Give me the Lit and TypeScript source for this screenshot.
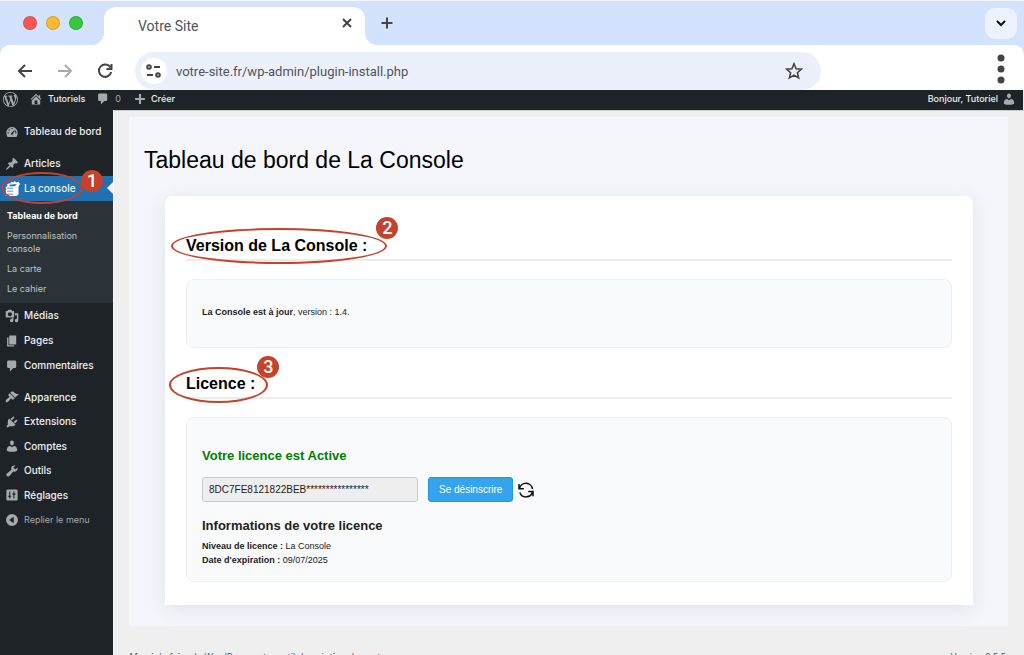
import { LitElement, html, css, svg } from "lit";
import { customElement, property } from "lit/decorators.js";

const glyphs: Record<string, unknown> = {
  wordpress: svg`<path fill-rule="evenodd" d="M20 10c0-5.510-4.490-10-10-10C4.480 0 0 4.490 0 10c0 5.520 4.480 10 10 10 5.510 0 10-4.480 10-10zM7.780 15.370L4.370 6.220c.550-.020 1.170-.080 1.170-.080.500-.060.440-1.130-.060-1.110 0 0-1.450.110-2.370.110-.180 0-.370 0-.580-.010C4.120 2.690 6.870 1.110 10 1.110c2.330 0 4.450.870 6.050 2.340-.680-.110-1.650.390-1.650 1.580 0 .740.450 1.360.900 2.100.350.610.550 1.360.550 2.460 0 1.490-1.400 5-1.400 5l-3.030-8.370c.540-.020.820-.170.820-.170.500-.050.440-1.250-.060-1.220 0 0-1.440.120-2.380.120-.870 0-2.330-.120-2.330-.120-.500-.030-.560 1.200-.060 1.220l.920.080 1.260 3.410zM17.410 10c.240-.640.740-1.870.430-4.250.700 1.290 1.050 2.710 1.050 4.250 0 3.290-1.730 6.240-4.400 7.780.970-2.590 1.940-5.200 2.920-7.780zM6.100 18.090C3.120 16.650 1.110 13.530 1.110 10c0-1.300.230-2.480.720-3.590C3.250 10.300 4.670 14.200 6.100 18.090zm4.030-6.630l2.580 6.980c-.860.290-1.760.450-2.710.450-.790 0-1.570-.110-2.290-.330.810-2.380 1.620-4.740 2.420-7.100z"/>`,
  home: svg`<path d="M16 8.5l1.53 1.53-1.06 1.06L10 4.6l-6.47 6.49-1.06-1.06L10 2.5l4 4v-2h2v4zm-6-2.46l6 5.99V18H4v-5.97zM12 17v-5H8v5h4z"/>`,
  comment: svg`<path d="M5 2h9c1.1 0 2 .9 2 2v7c0 1.1-.9 2-2 2h-2l-5 5v-5H5c-1.1 0-2-.9-2-2V4c0-1.1.9-2 2-2z"/>`,
  plus: svg`<path d="M17 8.5v3h-5.5V17h-3v-5.5H3v-3h5.5V3h3v5.5z"/>`,
  dashboard: svg`<path fill-rule="evenodd" d="M3.76 17h12.48c1.34-1.63 1.76-3.73 1.76-6 0-4.42-3.58-8-8-8s-8 3.58-8 8c0 2.27.42 4.37 1.76 6zM9 5a1 1 0 1 1 2 0 1 1 0 0 1-2 0zM5 7a1 1 0 1 1 2 0 1 1 0 0 1-2 0zm3.5 5.5c0-.8.7-1.3 1.3-1.6L14.5 6l-2.8 6.5c0 2.300-3.200 2.200-3.200 0zM15 8a1 1 0 1 1 0 2 1 1 0 0 1 0-2zM3.5 11a1 1 0 1 1 2 0 1 1 0 0 1-2 0zm11 0a1 1 0 1 1 2 0 1 1 0 0 1-2 0z"/>`,
  pin: svg`<path d="M10.44 3.02l1.82-1.82 6.36 6.35-1.83 1.82c-1.05-.68-2.48-.57-3.41.36l-.75.75c-.92.93-1.04 2.35-.35 3.41l-1.83 1.82-2.41-2.41-2.8 2.79c-.42.42-3.38 2.71-3.8 2.29s1.86-3.39 2.28-3.81l2.79-2.79L4.1 9.36l1.83-1.82c1.05.69 2.48.57 3.4-.36l.75-.75c.93-.92 1.05-2.35.36-3.41z"/>`,
  console: svg`<path fill-rule="evenodd" d="M1 8l2-1V4l3-1 1 1 1-3 3 1 2-2 2 2 3-1 2 3-2 3v11l-3 2H1v-3l1-1-1-1v-3l1-1-1-1zM3 9v1h8V9zm0 4v1h8v-1zm0 4v1h8v-1zM6 5v2h7l3-3z"/>`,
  media: svg`<path fill-rule="evenodd" d="M13 11V4c0-.55-.45-1-1-1h-1.670L9 1H5L3.670 3H2c-.55 0-1 .45-1 1v7c0 .55.45 1 1 1h10c.55 0 1-.45 1-1zM7 4.500a3 3 0 1 1 0 6 3 3 0 0 1 0-6zM14 6h5v10.500a2.500 2.500 0 1 1-2-2.450V9h-3zm-4 8.050V13h2v3.500a2.500 2.500 0 1 1-2-2.450z"/>`,
  pages: svg`<path d="M6 15V2h10v13H6zm-1 1h8v2H3V5h2v11z"/>`,
  appearance: svg`<path d="M14.48 11.06L7.41 3.99l1.5-1.5c.5-.56 2.3-.47 3.51.32 1.21.8 1.43 1.28 2.91 2.1 1.18.64 2.45 1.26 4.45.85zm-.71.71L6.7 4.7 4.93 6.47c-.39.39-.39 1.02 0 1.41l1.06 1.06c.39.39.39 1.03 0 1.42-.6.6-1.43 1.11-2.21 1.69-.35.26-.7.53-1.01.84C1.43 14.23.4 16.08 1.4 17.07c.99 1 2.84-.03 4.18-1.36.31-.31.58-.66.85-1.02.57-.78 1.08-1.61 1.69-2.21.39-.39 1.02-.39 1.41 0l1.06 1.06c.39.39 1.02.39 1.41 0z"/>`,
  plugin: svg`<path d="M13.11 4.36L9.87 7.6 8 5.73l3.24-3.24c.35-.34 1.05-.2 1.56.32.52.51.66 1.21.31 1.55zm-8 1.77l.91-1.12 9.01 9.01-1.19.84c-.71.71-2.63 1.16-3.82 1.16H6.14L4.9 17.26c-.59.59-1.54.59-2.12 0-.59-.58-.59-1.53 0-2.12l1.24-1.24v-3.88c0-1.13.4-3.19 1.09-3.89zm7.26 3.97l3.24-3.24c.34-.35 1.04-.21 1.55.31.52.51.66 1.21.31 1.55l-3.24 3.25z"/>`,
  user: svg`<path d="M10 9.250c-2.270 0-2.730-3.440-2.730-3.440C7 4.020 7.820 2 9.970 2c2.160 0 2.980 2.020 2.710 3.810 0 0-.410 3.440-2.680 3.440zm0 2.570L12.720 10c2.390 0 4.520 2.330 4.520 4.530v2.490s-3.650 1.130-7.240 1.130c-3.650 0-7.240-1.130-7.240-1.130v-2.490c0-2.250 1.940-4.480 4.470-4.480z"/>`,
  tools: svg`<path d="M16.68 9.77c-1.34 1.34-3.3 1.67-4.95.99l-5.41 6.52c-.99.99-2.59.99-3.58 0s-.99-2.59 0-3.57l6.52-5.42c-.68-1.65-.35-3.61.99-4.95 1.28-1.28 3.12-1.62 4.72-1.06l-2.89 2.89 2.82 2.82 2.86-2.87c.53 1.58.18 3.39-1.08 4.65z"/>`,
  settings: svg`<path fill-rule="evenodd" d="M18 16V4c0-1.1-.9-2-2-2H4c-1.1 0-2 .9-2 2v12c0 1.1.9 2 2 2h12c1.1 0 2-.9 2-2zM6 5h1.5v6H9v1.5H7.5V15H6v-2.500H4.500V11H6zm6 0h1.500v3H15v1.500h-1.500V15H12V9.500h-1.500V8H12z"/>`,
  collapse: svg`<path fill-rule="evenodd" d="M10 1.500a8.500 8.500 0 1 1 0 17 8.500 8.500 0 0 1 0-17zM12.500 5.500L6 10l6.500 4.500z"/>`,
};

const icon = (name: string) =>
  html`<svg class="icon" viewBox="0 0 20 20" aria-hidden="true">${glyphs[name]}</svg>`;

@customElement("step-mark")
class StepMark extends LitElement {
  @property() label = "";
  static styles = css`
    :host { position: absolute; inset: 0; pointer-events: none; }
    .ring { position: absolute; inset: 0; border: 2px solid #c5432d; border-radius: 50%; }
    .dot {
      position: absolute; right: -11px; top: -11px; width: 22px; height: 22px;
      border-radius: 50%; background: #c5432d; color: #fff; text-align: center;
      font: 500 18px/22px Roboto, sans-serif;
    }
    :host([low]) .dot { right: -20px; top: -2px; }
  `;
  render() {
    return html`<div class="ring"></div><div class="dot">${this.label}</div>`;
  }
}

@customElement("browser-chrome")
class BrowserChrome extends LitElement {
  static styles = css`
    :host { display: block; font-family: Roboto, sans-serif; background: #d3e3fd; }
    button { border: 0; padding: 0; background: none; color: #444; display: grid; place-items: center; }
    svg { fill: none; stroke: currentColor; stroke-width: 2; display: block; }
    .strip { display: flex; align-items: center; height: 45px; box-sizing: border-box; border-top: 1px solid #f4f8fe; padding: 0 7px 0 23px; }
    .light { width: 14px; height: 14px; border-radius: 50%; margin-right: 9px; box-sizing: border-box; border: 1px solid #0002; }
    .red { background: #fb5750; }
    .amber { background: #fcbb2e; }
    .green { background: #37c840; }
    .tab {
      position: relative; align-self: flex-end; display: flex; align-items: center; justify-content: space-between;
      box-sizing: border-box; width: 261px; height: 38px; margin-left: 12px; padding: 0 10px 0 34px;
      background: #fff; border-radius: 12px 12px 0 0; color: #505357; font-size: 14px;
    }
    .tab::before, .tab::after { content: ""; position: absolute; bottom: 0; width: 12px; height: 12px; }
    .tab::before { right: 100%; background: radial-gradient(circle at 0 0, #0000 12px, #fff 12px); }
    .tab::after { left: 100%; background: radial-gradient(circle at 100% 0, #0000 12px, #fff 12px); }
    .tab button { padding-bottom: 6px; }
    .new { margin-left: 15px; }
    .more { margin-left: auto; width: 32px; height: 31px; border-radius: 10px; background: #edf3fe; color: #111; }
    .bar { display: flex; align-items: center; height: 45px; background: #fff; border-radius: 10px 10px 0 0; padding: 7px 13px 0 15px; box-sizing: border-box; }
    .nav { width: 20px; margin-right: 20px; }
    .faded { color: #aaa; }
    .address {
      flex: 0 1 686px; display: flex; align-items: center; height: 38px; min-width: 0; box-sizing: border-box;
      border-radius: 19px; background: #ebf0fa; padding: 0 18px 0 6px;
    }
    .site { flex: none; width: 26px; height: 26px; border-radius: 50%; background: #fff; }
    input { flex: 1; min-width: 0; border: 0; background: none; padding: 1px 0 0; margin-left: 9px; font: 13px Roboto, sans-serif; color: #50535a; }
    .menu { margin-left: auto; width: 20px; padding-bottom: 5px; }
    .menu svg { fill: currentColor; stroke: none; }
  `;
  render() {
    return html`
      <div class="strip">
        <span class="light red"></span><span class="light amber"></span><span class="light green"></span>
        <div class="tab"><span>Votre Site</span>
          <button aria-label="Fermer"><svg width="16" height="16" viewBox="0 0 16 16"><path d="M4 4l8 8M12 4l-8 8"/></svg></button>
        </div>
        <button class="new" aria-label="Nouvel onglet"><svg width="14" height="14" viewBox="0 0 14 14"><path d="M7 1.500v11M1.500 7h11"/></svg></button>
        <button class="more" aria-label="Onglets"><svg width="14" height="14" viewBox="0 0 14 14"><path d="M3 5l4 4 4-4"/></svg></button>
      </div>
      <div class="bar">
        <button class="nav" aria-label="Retour"><svg width="20" height="20" viewBox="0 0 20 20"><path d="M17 10H4M10 4l-6 6 6 6"/></svg></button>
        <button class="nav faded" aria-label="Suivant"><svg width="20" height="20" viewBox="0 0 20 20"><path d="M3 10h13M10 4l6 6-6 6"/></svg></button>
        <button class="nav" aria-label="Recharger"><svg width="20" height="20" viewBox="0 0 20 20"><path d="M15.500 6.500A6.200 6.200 0 1 0 16.200 11M16.500 3v5h-5"/></svg></button>
        <div class="address">
          <button class="site" aria-label="Infos du site"><svg width="18" height="16" viewBox="0 0 18 16"><circle cx="4" cy="4" r="1.800"/><path d="M9 4h6M2 12h6"/><circle cx="13" cy="12" r="1.800"/></svg></button>
          <input aria-label="Adresse" value="votre-site.fr/wp-admin/plugin-install.php">
          <button aria-label="Favori"><svg width="18" height="18" viewBox="0 0 18 18"><path d="M9 1.800l2.100 4.900 5.300.5-4 3.500 1.200 5.200L9 13.100l-4.600 2.800 1.200-5.200-4-3.500 5.300-.5z" stroke-width="1.600"/></svg></button>
        </div>
        <button class="menu" aria-label="Menu"><svg width="8" height="30" viewBox="0 0 8 30"><circle cx="4" cy="4" r="3.500"/><circle cx="4" cy="15" r="3.500"/><circle cx="4" cy="26" r="3.500"/></svg></button>
      </div>`;
  }
}

@customElement("admin-bar")
class AdminBar extends LitElement {
  static styles = css`
    :host { display: flex; align-items: center; height: 20px; box-sizing: border-box; padding: 0 7px 2px 3px; margin-right: 1px; background: #1d2327; color: #f0f0f1; font: 500 9px/18px Inter, sans-serif; }
    a { display: flex; align-items: center; gap: 5px; color: inherit; text-decoration: none; }
    .icon { width: 14px; height: 14px; fill: #a7aaad; }
    .wp .icon { width: 15px; height: 15px; }
    .home { margin-left: 11px; }
    .comments { margin-left: 11px; color: #a7aaad; font-weight: 400; }
    .new { margin-left: 12px; gap: 4px; }
    .me { margin-left: auto; gap: 4px; }
  `;
  render() {
    return html`
      <a class="wp" href="#" aria-label="WordPress">${icon("wordpress")}</a>
      <a class="home" href="#">${icon("home")}Tutoriels</a>
      <a class="comments" href="#">${icon("comment")}0</a>
      <a class="new" href="#">${icon("plus")}Créer</a>
      <a class="me" href="#">Bonjour, Tutoriel ${icon("user")}</a>`;
  }
}

@customElement("admin-menu")
class AdminMenu extends LitElement {
  static styles = css`
    :host { display: block; background: #1d2327; color: #f0f0f1; font: 500 10px/13px Inter, sans-serif; padding-top: 9px; border-right: 1px solid #f8f8f8; }
    a, button { color: inherit; text-decoration: none; }
    .item { display: flex; align-items: center; gap: 5px; width: 100%; height: 25px; padding: 0 0 0 5px; box-sizing: border-box; border: 0; background: none; font: inherit; }
    .icon { width: 14px; height: 14px; fill: #a7aaad; flex: none; }
    .group { padding-bottom: 7px; }
    .group:last-child { display: grid; grid-auto-rows: 1fr; height: 147px; padding: 0; }
    .group:last-child .item { height: auto; }
    .current { position: relative; background: #2271b1; }
    .current .icon { width: 15px; height: 15px; margin-right: -1px; fill: #fff; }
    .current::after { content: ""; position: absolute; right: 0; top: 6px; border: 6px solid transparent; border-left: 0; border-right-color: #f0f0f1; }
    .mark { position: absolute; left: 1px; top: -4px; width: 82px; height: 32px; }
    .sub { background: #2c3338; color: #bfc3c7; font-weight: 400; font-size: 9px; padding: 4px 7px 5px; }
    .sub a { display: block; padding: 4px 30px 3px 0; }
    .sub a:first-child { color: #fff; font-weight: 700; padding-right: 0; }
    .item.collapse { color: #a7aaad; font-weight: 400; font-size: 9px; }
  `;
  private item(name: string, text: string) {
    return html`<a class="item" href="#">${icon(name)}${text}</a>`;
  }
  render() {
    return html`<nav>
      <div class="group">${this.item("dashboard", "Tableau de bord")}</div>
      <div class="group">
        ${this.item("pin", "Articles")}
        <a class="item current" href="#">${icon("console")}La console
          <span class="mark"><step-mark label="1" low></step-mark></span></a>
        <div class="sub">
          <a href="#">Tableau de bord</a>
          <a href="#">Personnalisation console</a>
          <a href="#">La carte</a>
          <a href="#">Le cahier</a>
        </div>
        ${this.item("media", "Médias")}
        ${this.item("pages", "Pages")}
        ${this.item("comment", "Commentaires")}
      </div>
      <div class="group">
        ${this.item("appearance", "Apparence")}
        ${this.item("plugin", "Extensions")}
        ${this.item("user", "Comptes")}
        ${this.item("tools", "Outils")}
        ${this.item("settings", "Réglages")}
        <button class="item collapse">${icon("collapse")}Replier le menu</button>
      </div>
    </nav>`;
  }
}

@customElement("console-page")
class ConsolePage extends LitElement {
  static styles = css`
    :host { display: block; padding: 6px 16px 0 15px; font: 9px/14px "Liberation Sans", Arial, sans-serif; color: #222; border-top: 1px solid #ccc; }
    .wrap { background: #f4f6fb; padding: 27px 35px 21px 36px; }
    h1 { font-size: 23px; line-height: 32px; font-weight: 400; color: #000; margin: 0 0 20px -21px; }
    .card { background: #fff; border-radius: 8px 8px 0 0; padding: 40px 21px 23px; box-shadow: 0 4px 20px #2a3a6018; }
    h2 { font-size: 16px; line-height: 20px; margin: 0 0 18px; padding-bottom: 3px; border-bottom: 2px solid #ececec; color: #000; }
    .target { position: relative; display: inline-block; }
    .mark { position: absolute; inset: -8px -20px -8px -15px; }
    .short .mark { inset: -7px -13px -9px -17px; }
    .panel { background: #f9fafc; border: 1px solid #efefef; border-radius: 8px; padding: 25px 15px 28px; }
    .panel + h2 { margin-top: 26px; }
    .panel.lic { padding: 30px 15px 14px; }
    p { margin: 0; }
    h3 { font-size: 13px; line-height: 16px; margin: 0; }
    .ok { color: #008000; }
    form { display: flex; align-items: center; margin: 13px 0 16px; }
    input { flex: 0 1 216px; min-width: 0; height: 25px; box-sizing: border-box; border: 1px solid #ccc; border-radius: 3px; background: #eee; padding: 0 6px; font: 10px "Liberation Sans", sans-serif; color: #222; }
    .off { height: 25px; padding: 0 10px; margin-left: 10px; border: 1px solid #2196ec; border-radius: 3px; background: #36a3ed; color: #fff; font: 10px "Liberation Sans", sans-serif; }
    .sync { border: 0; background: none; padding: 0; margin-left: 4px; }
    .sync svg { display: block; fill: none; stroke: #111; stroke-width: 1.5; }
    .facts { margin-top: 5px; }
    footer { display: flex; justify-content: space-between; padding: 24px 2px 0 0; color: #50575e; font: 9px/14px Inter, sans-serif; }
    footer a { color: #2271b1; }
  `;
  render() {
    return html`
      <div class="wrap">
        <h1>Tableau de bord de La Console</h1>
        <div class="card">
          <h2><span class="target">Version de La Console :<span class="mark"><step-mark label="2"></step-mark></span></span></h2>
          <div class="panel"><p><b>La Console est à jour</b>, version : 1.4.</p></div>
          <h2><span class="target short">Licence :<span class="mark"><step-mark label="3"></step-mark></span></span></h2>
          <div class="panel lic">
            <h3 class="ok">Votre licence est Active</h3>
            <form>
              <input aria-label="Clé de licence" value="8DC7FE8121822BEB****************" readonly>
              <button class="off" type="button">Se désinscrire</button>
              <button class="sync" type="button" aria-label="Actualiser"><svg width="18" height="18" viewBox="0 0 18 18"><path d="M2.500 7.500A6.600 6.600 0 0 1 15.500 8M15.500 10.500A6.600 6.600 0 0 1 2.800 11.500M2 3v4.800h4.800M16 15.200v-4.700h-4.800"/></svg></button>
            </form>
            <h3>Informations de votre licence</h3>
            <div class="facts">
              <p><b>Niveau de licence :</b> La Console</p>
              <p><b>Date d'expiration :</b> 09/07/2025</p>
            </div>
          </div>
        </div>
      </div>
      <footer><i>Merci de faire de <a href="#">WordPress</a> votre outil de création de contenu.</i><span>Version 6.5.5</span></footer>`;
  }
}

@customElement("app-root")
class AppRoot extends LitElement {
  static styles = css`
    :host { display: flex; flex-direction: column; height: 100vh; overflow: hidden; background: #f0f0f1; }
    browser-chrome, admin-bar { flex: none; }
    .body { flex: 1; min-height: 0; display: grid; grid-template-columns: 114px minmax(0, 1fr); background: #efefef; }
    console-page { min-height: 0; }
  `;
  render() {
    return html`
      <browser-chrome></browser-chrome>
      <admin-bar></admin-bar>
      <div class="body"><admin-menu></admin-menu><console-page></console-page></div>`;
  }
}
